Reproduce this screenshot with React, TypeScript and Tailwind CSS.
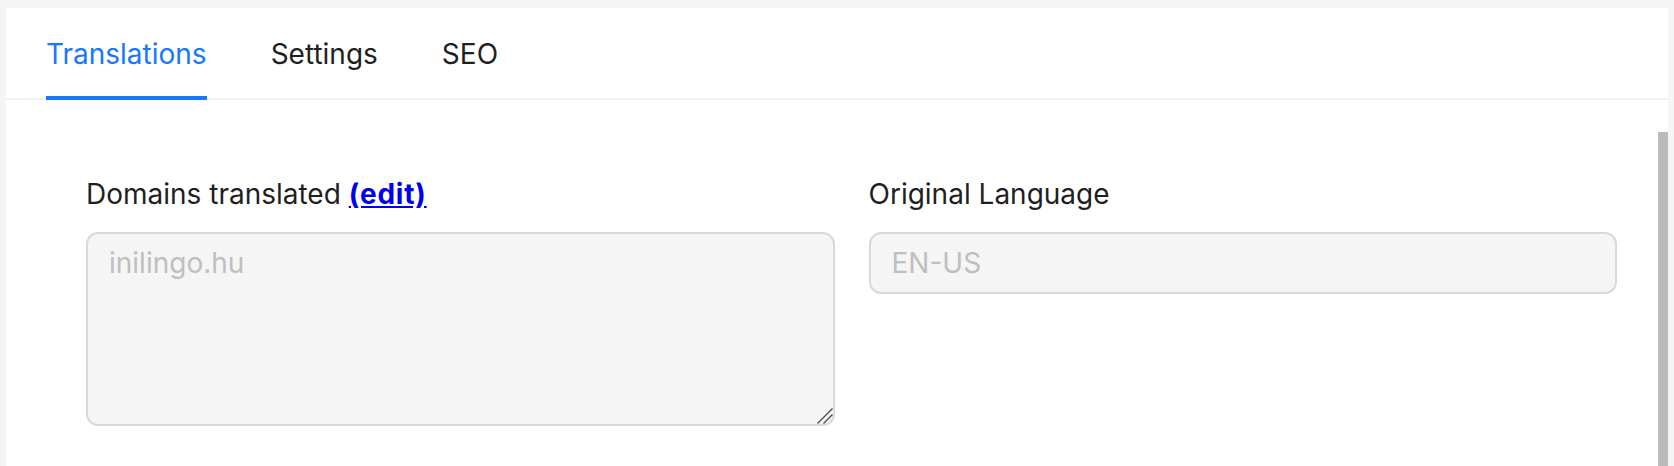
import React from "react";

export default function App() {
  const font = { fontFamily: "Inter, 'Noto Sans', sans-serif" };
  return (
    <div
      className="h-[466px] w-full overflow-hidden bg-[#f5f5f5] px-[6px] pt-[8px]"
      style={font}
    >
      <div className="flex h-full flex-col bg-white">
        <div className="flex border-b-2 border-[#f0f0f0] pl-[40px]">
          <div className="mb-[-2px] border-b-4 border-[#1677ff] pt-[24px] pb-[20px] text-[28px] leading-[44px] text-[#1677ff]">
            Translations
          </div>
          <div className="mb-[-2px] ml-[64px] border-b-4 border-transparent pt-[24px] pb-[20px] text-[28px] leading-[44px] text-[#1f1f1f]">
            Settings
          </div>
          <div className="mb-[-2px] ml-[64px] border-b-4 border-transparent pt-[24px] pb-[20px] text-[28px] leading-[44px] text-[#1f1f1f]">
            SEO
          </div>
        </div>
        <div className="flex min-h-0 flex-1">
          <div className="min-w-0 flex-1 pl-[80px] pr-[41px] pt-[72px]">
            <div className="grid grid-cols-2 gap-x-[34px]">
              <div className="flex flex-col">
                <div className="pb-[16px] text-[28px] leading-[44px] text-[#1f1f1f]">
                  Domains translated{" "}
                  <a href="#" className="font-bold tracking-[0.8px] text-[#0000f0] underline">
                    (edit)
                  </a>
                </div>
                <div className="relative">
                  <textarea
                    disabled
                    value="inilingo.hu"
                    readOnly
                    className="block h-[194px] w-full resize-none rounded-[12px] border-2 border-[#d9d9d9] bg-[#f5f5f5] px-[21px] pt-[7px] text-[28px] leading-[44px] text-[#bfbfbf] outline-none"
                    style={font}
                  />
                  <svg
                    className="pointer-events-none absolute right-[2px] bottom-[2px] h-[16px] w-[16px]"
                    viewBox="0 0 16 16"
                  >
                    <line x1="0.5" y1="15.5" x2="15.5" y2="0.5" stroke="#4a4a4a" strokeWidth="1.2" />
                    <line x1="6.5" y1="15.5" x2="15.5" y2="6.5" stroke="#4a4a4a" strokeWidth="1.2" />
                  </svg>
                </div>
              </div>
              <div className="flex flex-col">
                <div className="pb-[16px] text-[28px] leading-[44px] text-[#1f1f1f]">
                  Original Language
                </div>
                <div className="flex h-[62px] items-center rounded-[12px] border-2 border-[#d9d9d9] bg-[#f5f5f5] px-[21px] text-[28px] leading-[44px] text-[#bfbfbf]">
                  EN-US
                </div>
              </div>
            </div>
          </div>
          <div className="flex w-[10px] flex-col pt-[32px]">
            <div className="flex-1 bg-[#bababa]" />
          </div>
        </div>
      </div>
    </div>
  );
}
